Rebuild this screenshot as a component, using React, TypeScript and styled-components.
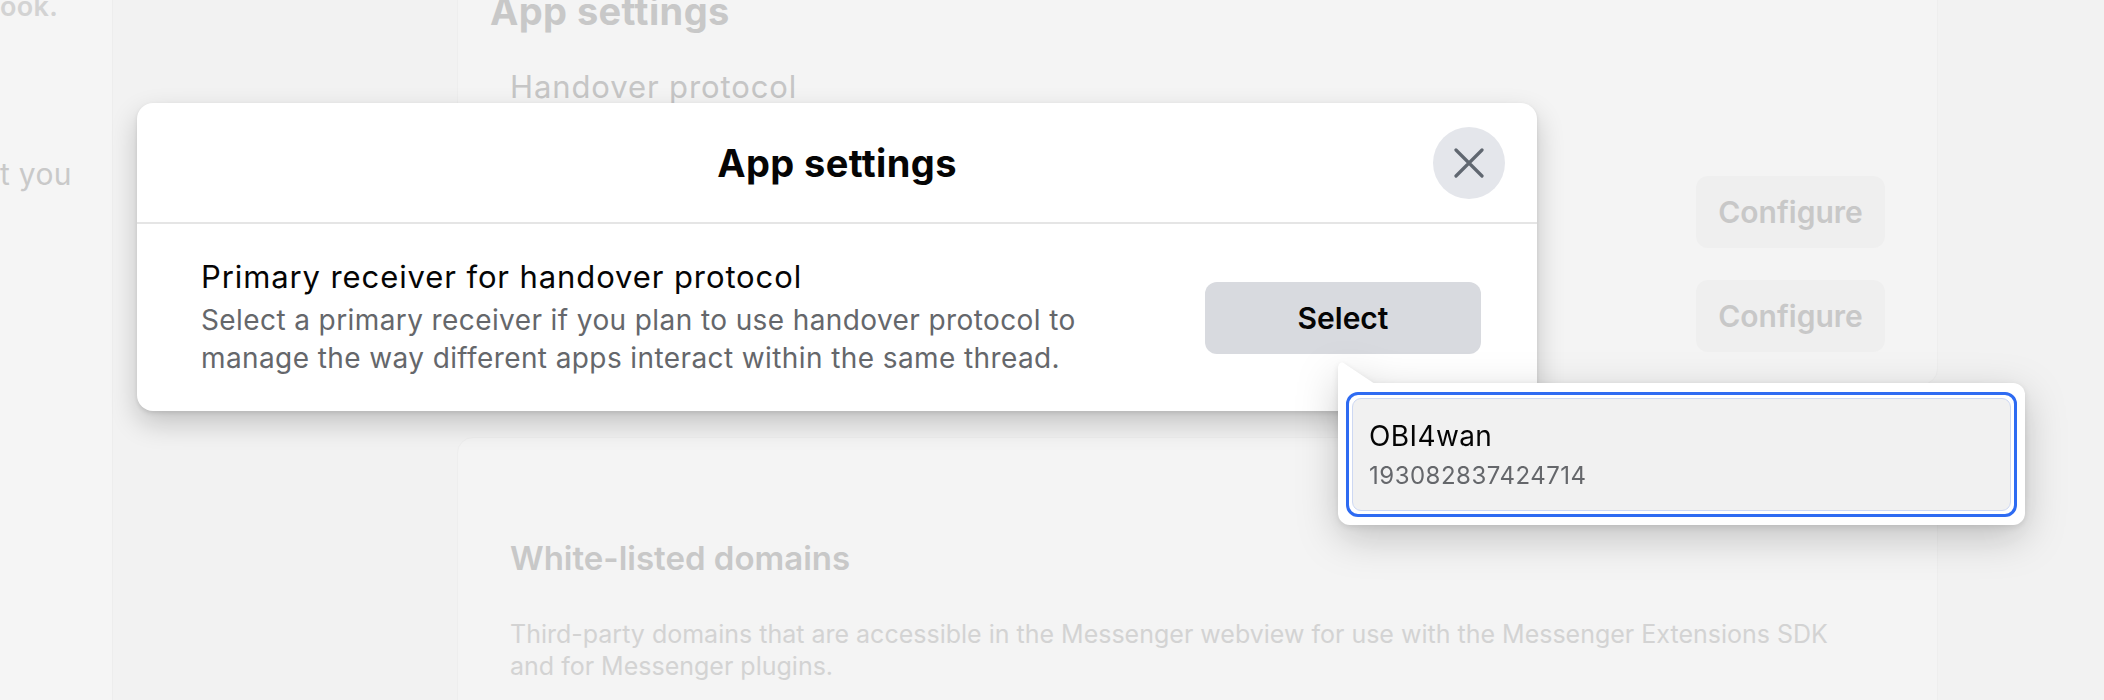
import React from "react";
import styled, { createGlobalStyle } from "styled-components";

const FONT = `Inter, "Noto Sans", "Liberation Sans", sans-serif`;

const GlobalStyle = createGlobalStyle`
  html, body {
    margin: 0;
    padding: 0;
    height: 700px;
    overflow: hidden;
  }
  body {
    font-family: ${FONT};
    background: #f2f2f2;
    -webkit-font-smoothing: antialiased;
  }
  #root {
    position: relative;
    height: 700px;
  }
`;

/* ---------- dimmed page behind the dialog ---------- */

const Page = styled.div`
  display: flex;
  height: 700px;
  overflow: hidden;
  background: #f2f2f2;
`;

const SideNav = styled.aside`
  flex: 0 0 112px;
  background: #f5f5f5;
  border-right: 1px solid #ededed;
  overflow: hidden;
  display: flex;
  flex-direction: column;
`;

const SideText = styled.p<{ $bold?: boolean; $top: number }>`
  margin: ${(p) => p.$top}px 0 0;
  font-size: ${(p) => (p.$bold ? 27 : 30)}px;
  line-height: 34px;
  letter-spacing: 0.3px;
  font-weight: ${(p) => (p.$bold ? 600 : 400)};
  color: ${(p) => (p.$bold ? "#d3d3d3" : "#c9c9c9")};
  white-space: nowrap;
`;

const Gutter = styled.div`
  flex: 0 0 344px;
`;

const MainColumn = styled.main`
  flex: 0 0 1481px;
  display: flex;
  flex-direction: column;
  gap: 52px;
  margin-top: -44px;
`;

const Card = styled.section<{ $padTop: number }>`
  background: #f4f4f4;
  border: 1px solid #eeeeee;
  border-radius: 16px;
  padding: ${(p) => p.$padTop}px 52px 32px 32px;
  display: flex;
  flex-direction: column;
`;

const CardHeading = styled.h2`
  margin: 0;
  font-size: 38px;
  line-height: 44px;
  letter-spacing: 0.4px;
  font-weight: 700;
  color: #c8c8c8;
`;

const Section = styled.div`
  padding-left: 20px;
  display: flex;
  flex-direction: column;
`;

const SectionTitle = styled.h3`
  margin: 35px 0 0;
  font-size: 31px;
  line-height: 38px;
  letter-spacing: 0.9px;
  font-weight: 400;
  color: #c6c6c6;
`;

const SettingRows = styled.div`
  margin-top: 70px;
  display: flex;
  flex-direction: column;
  gap: 32px;
`;

const SettingRow = styled.div`
  display: flex;
  align-items: center;
  justify-content: flex-end;
  height: 72px;
`;

const GhostButton = styled.button`
  width: 189px;
  height: 72px;
  border: none;
  border-radius: 12px;
  background: #efefef;
  color: #c8c8c8;
  font-family: ${FONT};
  font-size: 30px;
  font-weight: 600;
`;

const DomainsTitle = styled.h3`
  margin: 0;
  font-size: 33px;
  line-height: 38px;
  font-weight: 600;
  color: #c8c8c8;
`;

const DomainsText = styled.p`
  margin: 41px 0 0;
  font-size: 25px;
  line-height: 32px;
  color: #d3d3d3;
  max-width: 1320px;
`;

const Rest = styled.div`
  flex: 1;
`;

/* ---------- dialog ---------- */

const Dialog = styled.div`
  position: absolute;
  left: 137px;
  top: 103px;
  width: 1400px;
  background: #ffffff;
  border-radius: 16px;
  box-shadow: 0 12px 28px rgba(0, 0, 0, 0.2), 0 2px 4px rgba(0, 0, 0, 0.1);
  overflow: hidden;
`;

const DialogHeader = styled.header`
  height: 119px;
  display: grid;
  grid-template-columns: 1fr auto 1fr;
  align-items: center;
  padding: 0 32px;
  border-bottom: 2px solid #e5e5e5;
`;

const DialogTitle = styled.h1`
  grid-column: 2;
  margin: 0;
  font-size: 38px;
  line-height: 44px;
  letter-spacing: 0.4px;
  font-weight: 700;
  color: #050505;
`;

const CloseButton = styled.button`
  grid-column: 3;
  justify-self: end;
  width: 72px;
  height: 72px;
  border-radius: 50%;
  border: none;
  background: #e4e6eb;
  display: flex;
  align-items: center;
  justify-content: center;
  padding: 0;
`;

const DialogBody = styled.div`
  display: flex;
  align-items: center;
  justify-content: space-between;
  padding: 34px 56px 34px 64px;
`;

const Info = styled.div`
  display: flex;
  flex-direction: column;
  max-width: 930px;
`;

const InfoTitle = styled.div`
  font-size: 31px;
  line-height: 38px;
  letter-spacing: 0.9px;
  color: #050505;
  margin-bottom: 5px;
`;

const InfoText = styled.div`
  font-size: 28px;
  line-height: 38px;
  letter-spacing: 0.4px;
  color: #65676b;
`;

const SelectButton = styled.button`
  width: 276px;
  height: 72px;
  border: none;
  border-radius: 12px;
  background: #d8dadf;
  color: #050505;
  font-family: ${FONT};
  font-size: 30px;
  font-weight: 600;
`;

/* ---------- dropdown ---------- */

const Popover = styled.div`
  position: absolute;
  left: 1338px;
  top: 383px;
  width: 687px;
  box-sizing: border-box;
  padding: 9px 8px 8px;
  background: #ffffff;
  border-radius: 12px;
  border-top-left-radius: 0;
  filter: drop-shadow(0 12px 20px rgba(0, 0, 0, 0.2)) drop-shadow(0 2px 3px rgba(0, 0, 0, 0.1));

  &::before {
    content: "";
    position: absolute;
    left: 0;
    top: -21px;
    width: 37px;
    height: 22px;
    background: #ffffff;
    clip-path: polygon(0 100%, 0 5px, 1px 2px, 3px 0.5px, 5px 0.5px, 7px 2px, 100% 100%);
  }
`;

const OptionRing = styled.div`
  border: 3px solid #2e6bf2;
  border-radius: 12px;
  padding: 3px;
  background: #ffffff;
`;

const Option = styled.div`
  background: #f1f1f1;
  border: 1px solid #cdd8f3;
  border-radius: 9px;
  padding: 19px 16px 18px;
  display: flex;
  flex-direction: column;
  gap: 6px;
`;

const OptionName = styled.div`
  font-size: 28px;
  line-height: 36px;
  letter-spacing: 0.4px;
  color: #050505;
`;

const OptionId = styled.div`
  font-size: 24px;
  line-height: 32px;
  letter-spacing: 0.5px;
  color: #65676b;
`;

export default function App() {
  return (
    <>
      <GlobalStyle />
      <Page>
        <SideNav>
          <SideText $bold $top={-10}>
            ook.
          </SideText>
          <SideText $top={133}>t you</SideText>
        </SideNav>
        <Gutter />
        <MainColumn>
          <Card $padTop={32}>
            <CardHeading>App settings</CardHeading>
            <Section>
              <SectionTitle>Handover protocol</SectionTitle>
              <SettingRows>
                <SettingRow>
                  <GhostButton>Configure</GhostButton>
                </SettingRow>
                <SettingRow>
                  <GhostButton>Configure</GhostButton>
                </SettingRow>
              </SettingRows>
            </Section>
          </Card>
          <Card $padTop={101}>
            <Section>
              <DomainsTitle>White-listed domains</DomainsTitle>
              <DomainsText>
                Third-party domains that are accessible in the Messenger webview for use with the
                Messenger Extensions SDK and for Messenger plugins.
              </DomainsText>
            </Section>
          </Card>
        </MainColumn>
        <Rest />
      </Page>

      <Dialog role="dialog" aria-label="App settings">
        <DialogHeader>
          <DialogTitle>App settings</DialogTitle>
          <CloseButton aria-label="Close">
            <svg width="30" height="30" viewBox="0 0 30 30" fill="none">
              <path
                d="M2 2 L28 28 M28 2 L2 28"
                stroke="#606770"
                strokeWidth="3.2"
                strokeLinecap="round"
              />
            </svg>
          </CloseButton>
        </DialogHeader>
        <DialogBody>
          <Info>
            <InfoTitle>Primary receiver for handover protocol</InfoTitle>
            <InfoText>
              Select a primary receiver if you plan to use handover protocol to manage the way
              different apps interact within the same thread.
            </InfoText>
          </Info>
          <SelectButton>Select</SelectButton>
        </DialogBody>
      </Dialog>

      <Popover role="listbox">
        <OptionRing>
          <Option role="option" aria-selected="true">
            <OptionName>OBI4wan</OptionName>
            <OptionId>193082837424714</OptionId>
          </Option>
        </OptionRing>
      </Popover>
    </>
  );
}
